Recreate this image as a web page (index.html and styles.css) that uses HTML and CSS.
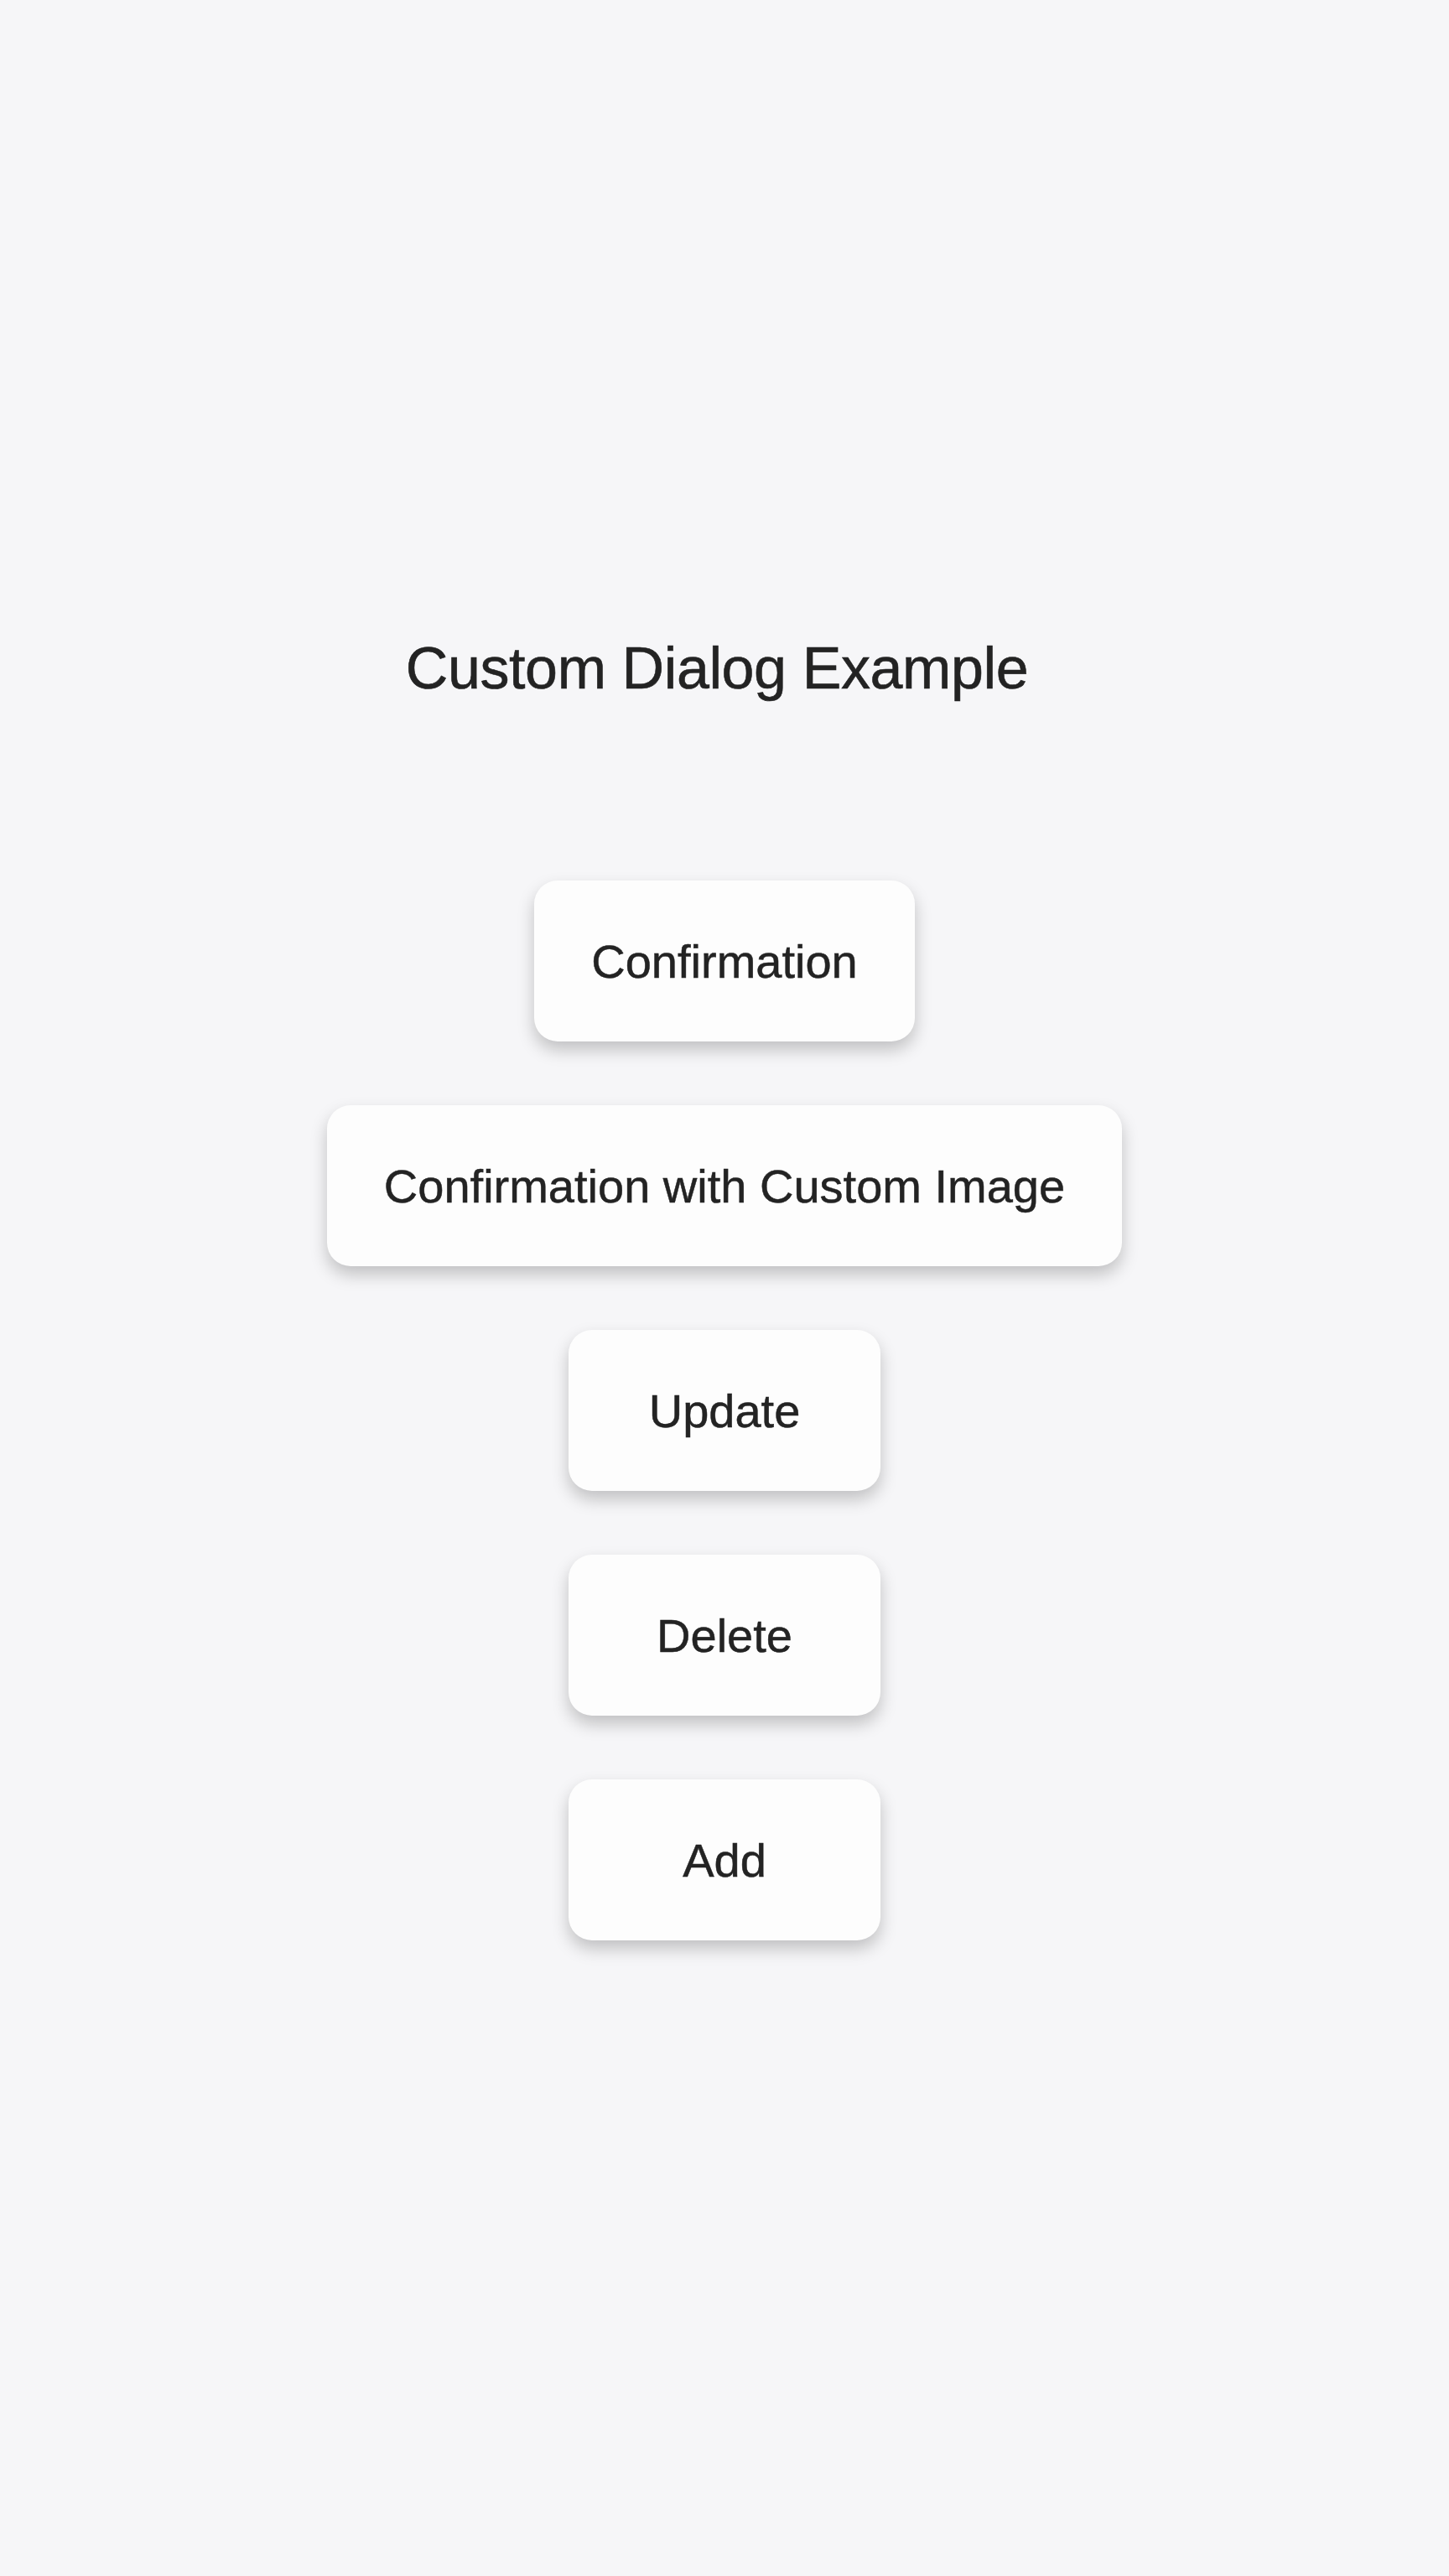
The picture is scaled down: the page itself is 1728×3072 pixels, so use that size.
FILE: index.html
```html
<!DOCTYPE html>
<html lang="en">
<head>
    <meta charset="UTF-8">
    <meta name="viewport" content="width=device-width, initial-scale=1.0">
    <title>Custom Dialog Example</title>
    <link rel="stylesheet" href="styles.css">
</head>
<body>
    <div class="page">
        <h1 class="title">Custom Dialog Example</h1>

        <div class="actions">
            <button class="action-btn">Confirmation</button>
            <button class="action-btn">Confirmation with Custom Image</button>
            <button class="action-btn">Update</button>
            <button class="action-btn">Delete</button>
            <button class="action-btn">Add</button>
        </div>
    </div>
</body>
</html>
```

FILE: styles.css
```css
html, body {
    margin: 0;
    background-color: #f6f6f8;
}
body {
    font-family: "Liberation Sans", Arial, sans-serif;
    color: #232323;
    min-height: 3072px;
}
.page {
    display: flex;
    flex-direction: column;
    align-items: center;
    padding-top: 757px;
}
.title {
    margin: 0;
    padding-right: 18px;
    font-size: 70px;
    font-weight: normal;
    line-height: 80px;
    letter-spacing: -0.4px;
    -webkit-text-stroke: 0.6px #232323;
}
.actions {
    display: flex;
    flex-direction: column;
    align-items: center;
    gap: 76px;
    margin-top: 213px;
}
.action-btn {
    height: 192px;
    min-width: 372px;
    padding: 0 68px;
    border: none;
    border-radius: 28px;
    background: #fdfdfd;
    color: #232323;
    font-family: "Liberation Sans", Arial, sans-serif;
    font-size: 56px;
    -webkit-text-stroke: 0.5px #232323;
    box-shadow: 0 10px 20px rgba(0, 0, 0, 0.22);
    cursor: pointer;
}
```
